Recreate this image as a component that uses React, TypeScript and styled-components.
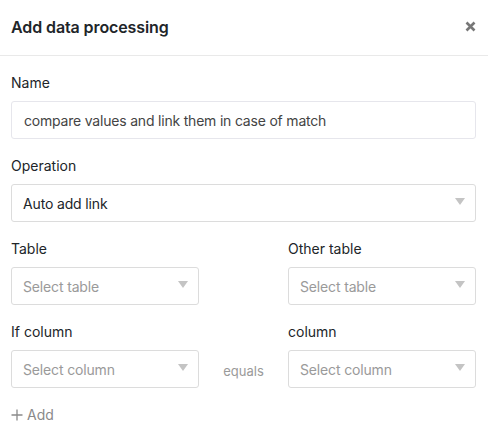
import React from "react";
import styled, { createGlobalStyle } from "styled-components";

const Global = createGlobalStyle`
  html, body { margin: 0; padding: 0; background: #fff; }
  body { font-family: Inter, "Noto Sans", "Liberation Sans", sans-serif; color: #212529; -webkit-font-smoothing: antialiased; }
  * { box-sizing: border-box; }
`;

const Dialog = styled.div`
  width: 488px;
  height: 429px;
  background: #fff;
  display: flex;
  flex-direction: column;
`;

const Header = styled.div`
  height: 56px;
  border-bottom: 1px solid #e9e9e9;
  display: flex;
  align-items: center;
  justify-content: space-between;
  padding: 0 12px 2px 11px;
`;

const Title = styled.h1`
  margin: 0;
  font-size: 16px;
  font-weight: 600;
  color: #212529;
  letter-spacing: -0.1px;
`;

const Close = styled.button`
  border: 0;
  background: none;
  padding: 0;
  width: 12px;
  height: 12px;
  display: flex;
  align-items: center;
  justify-content: center;
  cursor: pointer;
`;

const Body = styled.div`
  padding: 17px 12px 0 11px;
  display: flex;
  flex-direction: column;
`;

const Field = styled.div<{ $gap?: number }>`
  display: flex;
  flex-direction: column;
  margin-bottom: ${(p) => p.$gap ?? 17}px;
`;

const Label = styled.label`
  font-size: 14px;
  line-height: 20px;
  color: #212529;
  margin-bottom: 8px;
`;

const TextInput = styled.div`
  height: 38px;
  border: 1px solid #e6e6ec;
  border-radius: 3px;
  padding: 0 12px;
  display: flex;
  align-items: center;
  font-size: 14px;
  letter-spacing: -0.2px;
  color: #444;
`;

const Select = styled.div<{ $placeholder?: boolean }>`
  height: 38px;
  border: 1px solid #dcdcdc;
  border-radius: 3px;
  padding: 0 10px 0 11px;
  display: flex;
  align-items: center;
  justify-content: space-between;
  font-size: 14px;
  letter-spacing: -0.15px;
  color: ${(p) => (p.$placeholder ? "#9a9a9a" : "#212529")};
`;

const Arrow = styled.span`
  width: 0;
  height: 0;
  border-left: 5.5px solid transparent;
  border-right: 5.5px solid transparent;
  border-top: 7px solid #c4c4c4;
  margin-top: -3px;
`;

const Row = styled.div`
  display: grid;
  grid-template-columns: 188px 1fr 188px;
  align-items: end;
`;

const Equals = styled.div`
  height: 38px;
  display: flex;
  align-items: center;
  justify-content: center;
  font-size: 13px;
  color: #9a9a9a;
  margin-bottom: 17px;
  padding-top: 4px;
`;

const AddButton = styled.button`
  border: 0;
  background: none;
  padding: 0;
  display: flex;
  align-items: center;
  gap: 4px;
  font-family: inherit;
  font-size: 14px;
  color: #8a8a8a;
  margin-top: 1px;
  cursor: pointer;
`;

const SelectBox = ({ value, placeholder }: { value: string; placeholder?: boolean }) => (
  <Select $placeholder={placeholder}>
    <span>{value}</span>
    <Arrow />
  </Select>
);

export default function App() {
  return (
    <>
      <Global />
      <Dialog>
        <Header>
          <Title>Add data processing</Title>
          <Close aria-label="close">
            <svg width="11" height="11" viewBox="0 0 11 11">
              <path d="M1.5 1.5 L9.5 9.5 M9.5 1.5 L1.5 9.5" stroke="#777" strokeWidth="2.6" strokeLinecap="butt" />
            </svg>
          </Close>
        </Header>
        <Body>
          <Field>
            <Label>Name</Label>
            <TextInput>compare values and link them in case of match</TextInput>
          </Field>
          <Field>
            <Label>Operation</Label>
            <SelectBox value="Auto add link" />
          </Field>
          <Row>
            <Field>
              <Label>Table</Label>
              <SelectBox value="Select table" placeholder />
            </Field>
            <div />
            <Field>
              <Label>Other table</Label>
              <SelectBox value="Select table" placeholder />
            </Field>
          </Row>
          <Row>
            <Field>
              <Label>If column</Label>
              <SelectBox value="Select column" placeholder />
            </Field>
            <Equals>equals</Equals>
            <Field>
              <Label>column</Label>
              <SelectBox value="Select column" placeholder />
            </Field>
          </Row>
          <AddButton>
            <svg width="12" height="12" viewBox="0 0 12 12">
              <path d="M6 0.5 V11.5 M0.5 6 H11.5" stroke="#8a8a8a" strokeWidth="1.3" />
            </svg>
            Add
          </AddButton>
        </Body>
      </Dialog>
    </>
  );
}
